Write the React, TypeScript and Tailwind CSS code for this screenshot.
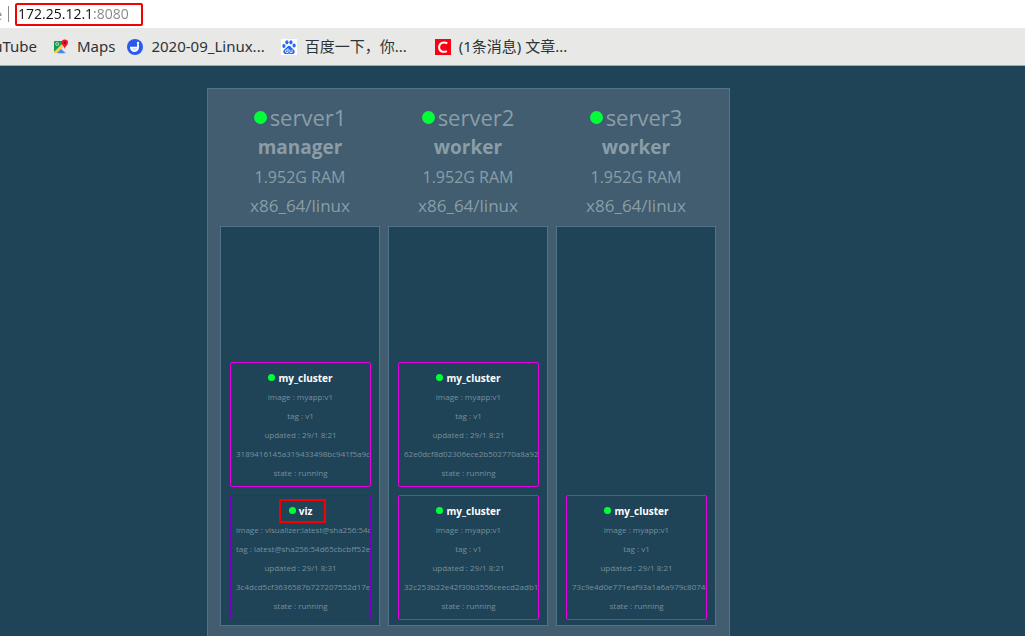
import { useState } from "react";
import type { ReactNode } from "react";

interface Task {
  name: string;
  image: string;
  tag: string;
  updated: string;
  id: string;
  state: string;
  highlighted?: boolean;
}

interface Server {
  name: string;
  role: string;
  ram: string;
  arch: string;
  tasks: Task[];
}

const servers: Server[] = [
  {
    name: "server1",
    role: "manager",
    ram: "1.952G RAM",
    arch: "x86_64/linux",
    tasks: [
      { name: "my_cluster", image: "myapp:v1", tag: "v1", updated: "29/1 8:21", id: "3189416145a319433498bc941f5a9ca", state: "running" },
      { name: "viz", image: "visualizer:latest@sha256:54d65c", tag: "latest@sha256:54d65cbcbff52ee", updated: "29/1 8:31", id: "3c4dcd5cf3636587b727207552d17e4", state: "running", highlighted: true },
    ],
  },
  {
    name: "server2",
    role: "worker",
    ram: "1.952G RAM",
    arch: "x86_64/linux",
    tasks: [
      { name: "my_cluster", image: "myapp:v1", tag: "v1", updated: "29/1 8:21", id: "62e0dcf8d02306ece2b502770a8a928", state: "running" },
      { name: "my_cluster", image: "myapp:v1", tag: "v1", updated: "29/1 8:21", id: "32c253b22e42f30b3556ceecd2adb1f", state: "running" },
    ],
  },
  {
    name: "server3",
    role: "worker",
    ram: "1.952G RAM",
    arch: "x86_64/linux",
    tasks: [
      { name: "my_cluster", image: "myapp:v1", tag: "v1", updated: "29/1 8:21", id: "73c9e4d0e771eaf93a1a6a979c80745", state: "running" },
    ],
  },
];

function MapsIcon() {
  return (
    <svg viewBox="0 0 16 16" className="w-4 h-4 shrink-0" aria-hidden="true">
      <path d="M1 2h12v12H1z" fill="#d8d8d8" />
      <path d="M1 3a1 1 0 0 1 1-1h10L1 13z" fill="#159a50" />
      <path d="M1 13.5 11 4l1.500 1.500L4 14H2z" fill="#f7cf3c" />
      <path d="M4 14.300 8 10l4.500 4.300z" fill="#4285f4" />
      <path d="m9 9.500 2-2 2.500 3v3z" fill="#e8e8e8" />
      <circle cx="4.200" cy="5" r="1.500" fill="none" stroke="#d8f0e0" strokeWidth="0.800" />
      <path d="M11.800 0.500a3.200 3.200 0 0 0-3.200 3.200c0 2.400 2.700 3.200 3.200 6.300.5-3.100 3.200-3.900 3.200-6.300A3.200 3.200 0 0 0 11.800.5z" fill="#ea1530" />
      <circle cx="11.800" cy="3.700" r="1.100" fill="#7a0c22" />
    </svg>
  );
}

function MoocIcon() {
  return (
    <svg viewBox="0 0 16 16" className="w-4 h-4 shrink-0" aria-hidden="true">
      <circle cx="8" cy="8" r="8" fill="#2a5bf0" />
      <path d="M3 7.800h7V5.200h2v3.100a4.500 4.500 0 0 1-9 .3z" fill="#fff" />
      <path d="M5 9.200h5.200a2.700 2.700 0 0 1-5.200 0z" fill="#c9d7ff" />
      <circle cx="11" cy="4" r="1.200" fill="#fff" />
    </svg>
  );
}

function BaiduIcon() {
  return (
    <svg viewBox="0 0 16 16" className="w-4 h-4 shrink-0" aria-hidden="true">
      <path d="M0 0h16v16H0z" fill="#fff" />
      <g fill="#2468f2">
        <ellipse cx="2.900" cy="7" rx="1.600" ry="2" />
        <ellipse cx="5.900" cy="3.300" rx="1.600" ry="2.100" />
        <ellipse cx="9.900" cy="3.300" rx="1.600" ry="2.100" />
        <ellipse cx="13.100" cy="6.600" rx="1.600" ry="2" />
        <path d="M8 6.800c1.500 0 2.200 1.400 3.200 2.500 1 1 2.600 1.800 2.500 3.500 0 1.600-1.300 2.400-2.700 2.300-1.200 0-1.800-.3-3-.3s-1.800.3-3 .3c-1.400 0-2.700-.8-2.700-2.400 0-1.600 1.500-2.400 2.500-3.400S6.500 6.800 8 6.800z" />
      </g>
      <path d="M7 9.300v4.200H5.700a1.300 1.300 0 0 1 0-2.600H7M8.800 10.700v1.900c0 .7.300.9.900.9h1.400v-2.800" fill="none" stroke="#fff" strokeWidth="0.900" />
    </svg>
  );
}

function CsdnIcon() {
  return (
    <svg viewBox="0 0 16 16" className="w-4 h-4 shrink-0" aria-hidden="true">
      <path d="M0 0h16v16H0z" fill="#fc0012" />
      <path d="M12.300 4.300C9 2.500 4.200 3.500 4.100 8.200c0 4.600 4.500 5.500 7.800 3.900" fill="none" stroke="#fff" strokeWidth="2" />
    </svg>
  );
}

function Bookmark({ icon, label, className }: { icon: ReactNode; label: string; className: string }) {
  return (
    <a href="#bookmark" className={`flex items-center gap-2 whitespace-nowrap ${className}`}>
      {icon}
      {label}
    </a>
  );
}

function TaskCard({ task }: { task: Task }) {
  return (
    <li
      className={`h-[125px] rounded-xs border pt-1 pl-[5px] overflow-hidden whitespace-nowrap text-center text-[8px] leading-[19px] text-[#78909c] ${
        task.highlighted ? "border-[#7300c0]" : "border-[#e600e6]"
      }`}
    >
      <h3 className="h-5 pr-[5px] text-[10px] leading-5 font-bold text-white">
        <span className="relative inline-flex items-center gap-[3px]">
          <span className="w-[7px] h-[7px] rounded-full bg-[#00ff38]" />
          {task.name}
          {task.highlighted && (
            <span className="absolute -top-[2px] -bottom-[2px] -left-[10px] -right-[14px] border-2 border-[#f80000]" />
          )}
        </span>
      </h3>
      <div className="pr-[5px]">
        <p>image : {task.image}</p>
        <p>tag : {task.tag}</p>
        <p>updated : {task.updated}</p>
        <p>{task.id}</p>
        <p>state : {task.state}</p>
      </div>
    </li>
  );
}

function ServerColumn({ server }: { server: Server }) {
  return (
    <section className="w-40 text-center text-[#8a9da8]">
      <h2 className="flex items-center justify-center gap-[3px] text-[22px] leading-[30px]">
        <span className="w-[13px] h-[13px] rounded-full bg-[#00ff38]" />
        {server.name}
      </h2>
      <p className="text-[19px] leading-[30px] font-bold">{server.role}</p>
      <p className="text-[16px] leading-[30px]">{server.ram}</p>
      <p className="text-[17px] leading-7">{server.arch}</p>
      <ul className="mt-1.5 h-[400px] flex flex-col justify-end gap-2 pl-[9px] pr-2 pb-[5px] border border-[#50748a] bg-[#1f4357]">
        {server.tasks.map((task) => (
          <TaskCard key={task.id} task={task} />
        ))}
      </ul>
    </section>
  );
}

export default function App() {
  const [url, setUrl] = useState("172.25.12.1:8080");

  return (
    <div className="h-screen overflow-hidden flex flex-col bg-[#1f4357] font-['Open_Sans',sans-serif]">
      <header className="shrink-0">
        <div className="h-7 flex items-center bg-white text-[14px]">
          <span className="w-[2px] flex justify-end overflow-hidden text-[#8c8c8c]">Secure</span>
          <span className="ml-1.5 w-px h-4 bg-[#8c8c8c]" />
          <input
            aria-label="Address"
            value={url}
            onChange={(e) => setUrl(e.target.value)}
            className="ml-1.5 w-32 h-[23px] pl-px pb-px border-2 border-[#f80000] rounded-xs outline-none text-transparent caret-black bg-clip-text bg-[linear-gradient(90deg,#111_75px,#858585_75px)]"
          />
        </div>
        <nav className="h-[38px] flex items-center border-b border-[#a3aaa9] bg-[#e8e8e6] text-[15px] text-[#2e3436] font-['Noto_Sans','Noto_Sans_CJK_SC',sans-serif]">
          <a href="#youtube" className="w-[37px] flex justify-end overflow-hidden">YouTube</a>
          <Bookmark icon={<MapsIcon />} label="Maps" className="ml-4" />
          <Bookmark icon={<MoocIcon />} label="2020-09_Linux..." className="ml-3" />
          <Bookmark icon={<BaiduIcon />} label="百度一下，你..." className="ml-4" />
          <Bookmark icon={<CsdnIcon />} label="(1条消息) 文章..." className="ml-7" />
        </nav>
      </header>

      <main className="flex-1 flex items-start pt-[22px] pl-[207px]">
        <div className="flex gap-2 pt-[13px] pl-3 pr-[13px] pb-6 border border-[#50748a] bg-[#415d6f]">
          {servers.map((server) => (
            <ServerColumn key={server.name} server={server} />
          ))}
        </div>
      </main>
    </div>
  );
}
